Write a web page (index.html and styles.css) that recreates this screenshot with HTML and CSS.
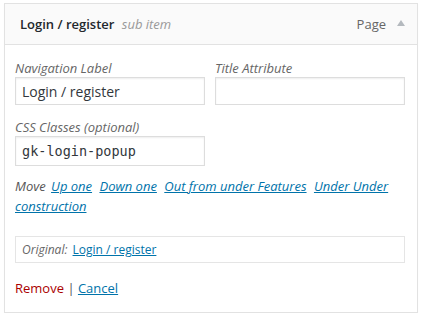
FILE: index.html
```html
<!DOCTYPE html>
<html lang="en">
<head>
    <meta charset="UTF-8">
    <title>Menu item</title>
    <link rel="stylesheet" href="styles.css">
</head>
<body>
    <div class="menu-item">
        <div class="item-bar">
            <span class="item-title">Login / register <em class="sub">sub item</em></span>
            <span class="item-type">Page</span>
            <span class="arrow"></span>
        </div>
        <div class="item-settings">
            <div class="row">
                <div class="field">
                    <label for="nav-label">Navigation Label</label>
                    <input type="text" id="nav-label" value="Login / register">
                </div>
                <div class="field">
                    <label for="title-attr">Title Attribute</label>
                    <input type="text" id="title-attr" value="">
                </div>
            </div>
            <div class="row last">
                <div class="field">
                    <label for="css-classes">CSS Classes (optional)</label>
                    <input type="text" id="css-classes" class="code" value="gk-login-popup">
                </div>
            </div>
            <div class="move">
                <em>Move</em>
                <a href="#">Up one</a>
                <a href="#">Down one</a>
                <a href="#">Out from under Features</a>
                <a href="#">Under Under construction</a>
            </div>
            <div class="original">
                <em>Original:</em> <a href="#">Login / register</a>
            </div>
            <div class="actions">
                <a href="#" class="remove">Remove</a> <span class="sep">|</span> <a href="#" class="cancel">Cancel</a>
            </div>
        </div>
    </div>
</body>
</html>
```

FILE: styles.css
```css
body {
    margin: 0;
    padding: 3px 0 0 4px;
    background: #fff;
    font-family: 'Open Sans', sans-serif;
    font-size: 13px;
    color: #444;
}
.menu-item {
    width: 412px;
    border: 1px solid #e2e2e2;
    box-shadow: 0 1px 1px rgba(0, 0, 0, 0.04);
}
.item-bar {
    display: flex;
    align-items: center;
    height: 40px;
    padding: 0 12px 0 15px;
    background: #fafafa;
    border-bottom: 1px solid #e2e2e2;
}
.item-title {
    flex: 1;
    font-weight: 600;
    color: #23282d;
}
.sub {
    font-weight: 400;
    color: #999;
    margin-left: 4px;
}
.item-type {
    color: #666;
    margin-right: 11px;
}
.arrow {
    width: 0;
    height: 0;
    border-left: 4px solid transparent;
    border-right: 4px solid transparent;
    border-bottom: 6px solid #b4b9be;
    margin-bottom: 2px;
}
.item-settings {
    padding: 15px 12px 14px 10px;
}
.row {
    display: flex;
    gap: 10px;
    margin-bottom: 14px;
}
.row.last {
    margin-bottom: 10px;
}
.field {
    width: 190px;
}
label {
    display: block;
    font-style: italic;
    color: #666;
    line-height: 17px;
}
input {
    display: block;
    width: 100%;
    height: 28px;
    margin: 0;
    padding: 2px 6px;
    box-sizing: border-box;
    border: 1px solid #ddd;
    box-shadow: inset 0 1px 2px rgba(0, 0, 0, 0.07);
    font-family: 'Open Sans', sans-serif;
    font-size: 14px;
    color: #32373c;
    background: #fff;
}
input.code {
    height: 30px;
    font-family: 'DejaVu Sans Mono', monospace;
    font-size: 13.5px;
}
.move {
    line-height: 20px;
}
.move em {
    color: #555;
    margin-right: 2px;
}
a {
    color: #0073aa;
    font-style: italic;
    margin-right: 4px;
}
.original {
    margin-top: 20px;
    padding: 3px 6px;
    border: 1px solid #e5e5e5;
    font-size: 12px;
    line-height: 19px;
}
.original em {
    color: #666;
    margin-right: 2px;
}
.original a {
    font-style: normal;
}
.actions {
    margin-top: 15px;
    line-height: 20px;
}
.actions a {
    font-style: normal;
    margin: 0;
}
.remove {
    color: #a00;
    text-decoration: none;
}
.sep {
    color: #555;
}
```
